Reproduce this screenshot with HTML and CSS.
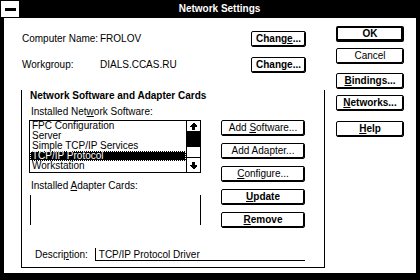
FILE: index.html
```html
<!DOCTYPE html>
<html lang="en">
  <head>
    <meta charset="UTF-8" />
    <meta name="viewport" content="width=device-width, initial-scale=1.0" />
    <title>Network Settings</title>
    <link rel="stylesheet" href="styles.css">
  </head>
  <body>
    <div class="window">
      <div class="titlebar">
        <div class="sysmenu"><span class="sysbar"></span></div>
        <div class="title">Network Settings</div>
      </div>

      <div class="client">
        <div class="main">
          <div class="info-row">
            <span class="info-label">Computer Name:</span>
            <span class="info-value">FROLOV</span>
            <button class="btn btn-bold btn-change">Chang<u>e</u>...</button>
          </div>
          <div class="info-row">
            <span class="info-label">Workgroup:</span>
            <span class="info-value">DIALS.CCAS.RU</span>
            <button class="btn btn-bold btn-change">Chan<u>g</u>e...</button>
          </div>

          <div class="group">
            <div class="group-title">Network Software and Adapter Cards</div>
            <div class="group-body">
              <div class="lists">
                <span class="field-label">Installed Net<u>w</u>ork Software:</span>
                <div class="listbox">
                  <div class="list-items">
                    <div class="list-item">FPC Configuration</div>
                    <div class="list-item">Server</div>
                    <div class="list-item">Simple TCP/IP Services</div>
                    <div class="list-item selected">TCP/IP Protocol</div>
                    <div class="list-item">Workstation</div>
                  </div>
                  <div class="scrollbar">
                    <div class="scroll-btn scroll-up">
                      <svg width="7" height="7" viewBox="0 0 7 7"><path d="M3 0h1l3 3v1H5v3H2V4H0V3z"/></svg>
                    </div>
                    <div class="scroll-track"></div>
                    <div class="scroll-thumb"></div>
                    <div class="scroll-btn scroll-down">
                      <svg width="7" height="7" viewBox="0 0 7 7"><path d="M3 7h1l3-3V3H5V0H2v3H0v1z"/></svg>
                    </div>
                  </div>
                </div>
                <span class="field-label adapter-label">Installed <u>A</u>dapter Cards:</span>
                <div class="adapter-box"></div>
              </div>

              <div class="group-buttons">
                <button class="btn btn-wide">Add <u>S</u>oftware...</button>
                <button class="btn btn-wide">Add Adapter...</button>
                <button class="btn btn-wide"><u>C</u>onfigure...</button>
                <button class="btn btn-wide btn-bold"><u>U</u>pdate</button>
                <button class="btn btn-wide btn-bold"><u>R</u>emove</button>
              </div>
            </div>

            <div class="desc-row">
              <span class="desc-label">Descri<u>p</u>tion:</span>
              <div class="desc-field">TCP/IP Protocol Driver</div>
            </div>
          </div>
        </div>

        <div class="side">
          <button class="btn btn-bold btn-default">OK</button>
          <button class="btn gap-small">Cancel</button>
          <button class="btn btn-bold gap-mid"><u>B</u>indings...</button>
          <button class="btn btn-bold gap-small"><u>N</u>etworks...</button>
          <button class="btn btn-bold gap-large"><u>H</u>elp</button>
        </div>
      </div>
    </div>
  </body>
</html>
```

FILE: styles.css
```css
* {
  box-sizing: border-box;
}

body {
  margin: 0;
  background-color: #000;
  font-family: 'Liberation Sans', Arial, sans-serif;
  font-size: 10px;
  line-height: 12px;
  color: #000;
}

.window {
  width: 420px;
  height: 280px;
  background-color: #000;
  display: flex;
  flex-direction: column;
}

.titlebar {
  height: 18px;
  display: flex;
}

.sysmenu {
  width: 18px;
  height: 16px;
  margin: 1px 0 0 1px;
  background-color: #fff;
  display: flex;
  align-items: center;
  justify-content: center;
}

.sysbar {
  width: 11px;
  height: 3px;
  background-color: #000;
}

.title {
  flex: 1;
  color: #fff;
  font-weight: bold;
  text-align: center;
  line-height: 18px;
}

.client {
  height: 255px;
  margin: 0 4px;
  padding-left: 17px;
  background-color: #fff;
  display: grid;
  grid-template-columns: 304px 68px;
  column-gap: 11px;
}

.main {
  padding-top: 13px;
}

.info-row {
  height: 16px;
  padding-left: 1px;
  display: flex;
  align-items: center;
}

.info-row + .info-row {
  margin-top: 10px;
}

.info-label {
  width: 78px;
}

.btn {
  height: 16px;
  padding: 0;
  background-color: #fff;
  border: 1px solid #000;
  border-radius: 2px;
  box-shadow: inset -1px -1px 0 #000;
  font: inherit;
  color: #000;
  text-align: center;
  white-space: nowrap;
}

.btn-bold {
  font-weight: bold;
}

.btn-default {
  border-width: 2px;
}

.btn-change {
  width: 55px;
  margin-left: auto;
  margin-right: 19px;
}

.btn-wide {
  width: 84px;
}

.side {
  padding-top: 8px;
  display: flex;
  flex-direction: column;
}

.gap-small {
  margin-top: 6px;
}

.gap-mid {
  margin-top: 9px;
}

.gap-large {
  margin-top: 10px;
}

.group {
  margin-top: 17px;
  padding: 0 19px 6px 7px;
  border: 1px solid #000;
  border-top: none;
}

.group-title {
  padding-left: 1px;
  font-weight: bold;
  white-space: nowrap;
}

.group-body {
  margin-top: 4px;
  display: grid;
  grid-template-columns: 172px 84px;
  column-gap: 20px;
}

.field-label {
  display: block;
  padding-left: 2px;
}

.listbox {
  height: 53px;
  margin-top: 2px;
  border: 1px solid #000;
  display: flex;
}

.list-items {
  flex: 1;
  overflow: hidden;
}

.list-item {
  height: 10px;
  padding-left: 2px;
  line-height: 10px;
  white-space: nowrap;
}

.list-item.selected {
  background-color: #000;
  color: #fff;
  outline: 1px dotted #fff;
  outline-offset: -1px;
}

.scrollbar {
  width: 14px;
  border-left: 1px solid #000;
  display: flex;
  flex-direction: column;
}

.scroll-btn {
  display: flex;
  align-items: center;
  justify-content: center;
}

.scroll-btn svg {
  shape-rendering: crispEdges;
}

.scroll-up {
  height: 11px;
  border-bottom: 1px solid #000;
}

.scroll-track {
  height: 15px;
  background-color: #000;
}

.scroll-thumb {
  height: 10px;
}

.scroll-down {
  height: 15px;
  border-top: 1px solid #000;
}

.adapter-label {
  margin-top: 7px;
}

.adapter-box {
  width: 171px;
  height: 30px;
  margin: 3px 0 0 1px;
  border-left: 1px solid #000;
  border-right: 1px solid #000;
}

.group-buttons {
  padding-top: 14px;
  display: flex;
  flex-direction: column;
  gap: 7px;
}

.desc-row {
  height: 13px;
  margin-top: 20px;
  padding-left: 6px;
  display: flex;
}

.desc-label {
  width: 60px;
  padding-top: 1px;
}

.desc-field {
  width: 211px;
  padding: 1px 0 0 3px;
  border-left: 1px solid #000;
  border-bottom: 1px solid #000;
  white-space: nowrap;
}
```
